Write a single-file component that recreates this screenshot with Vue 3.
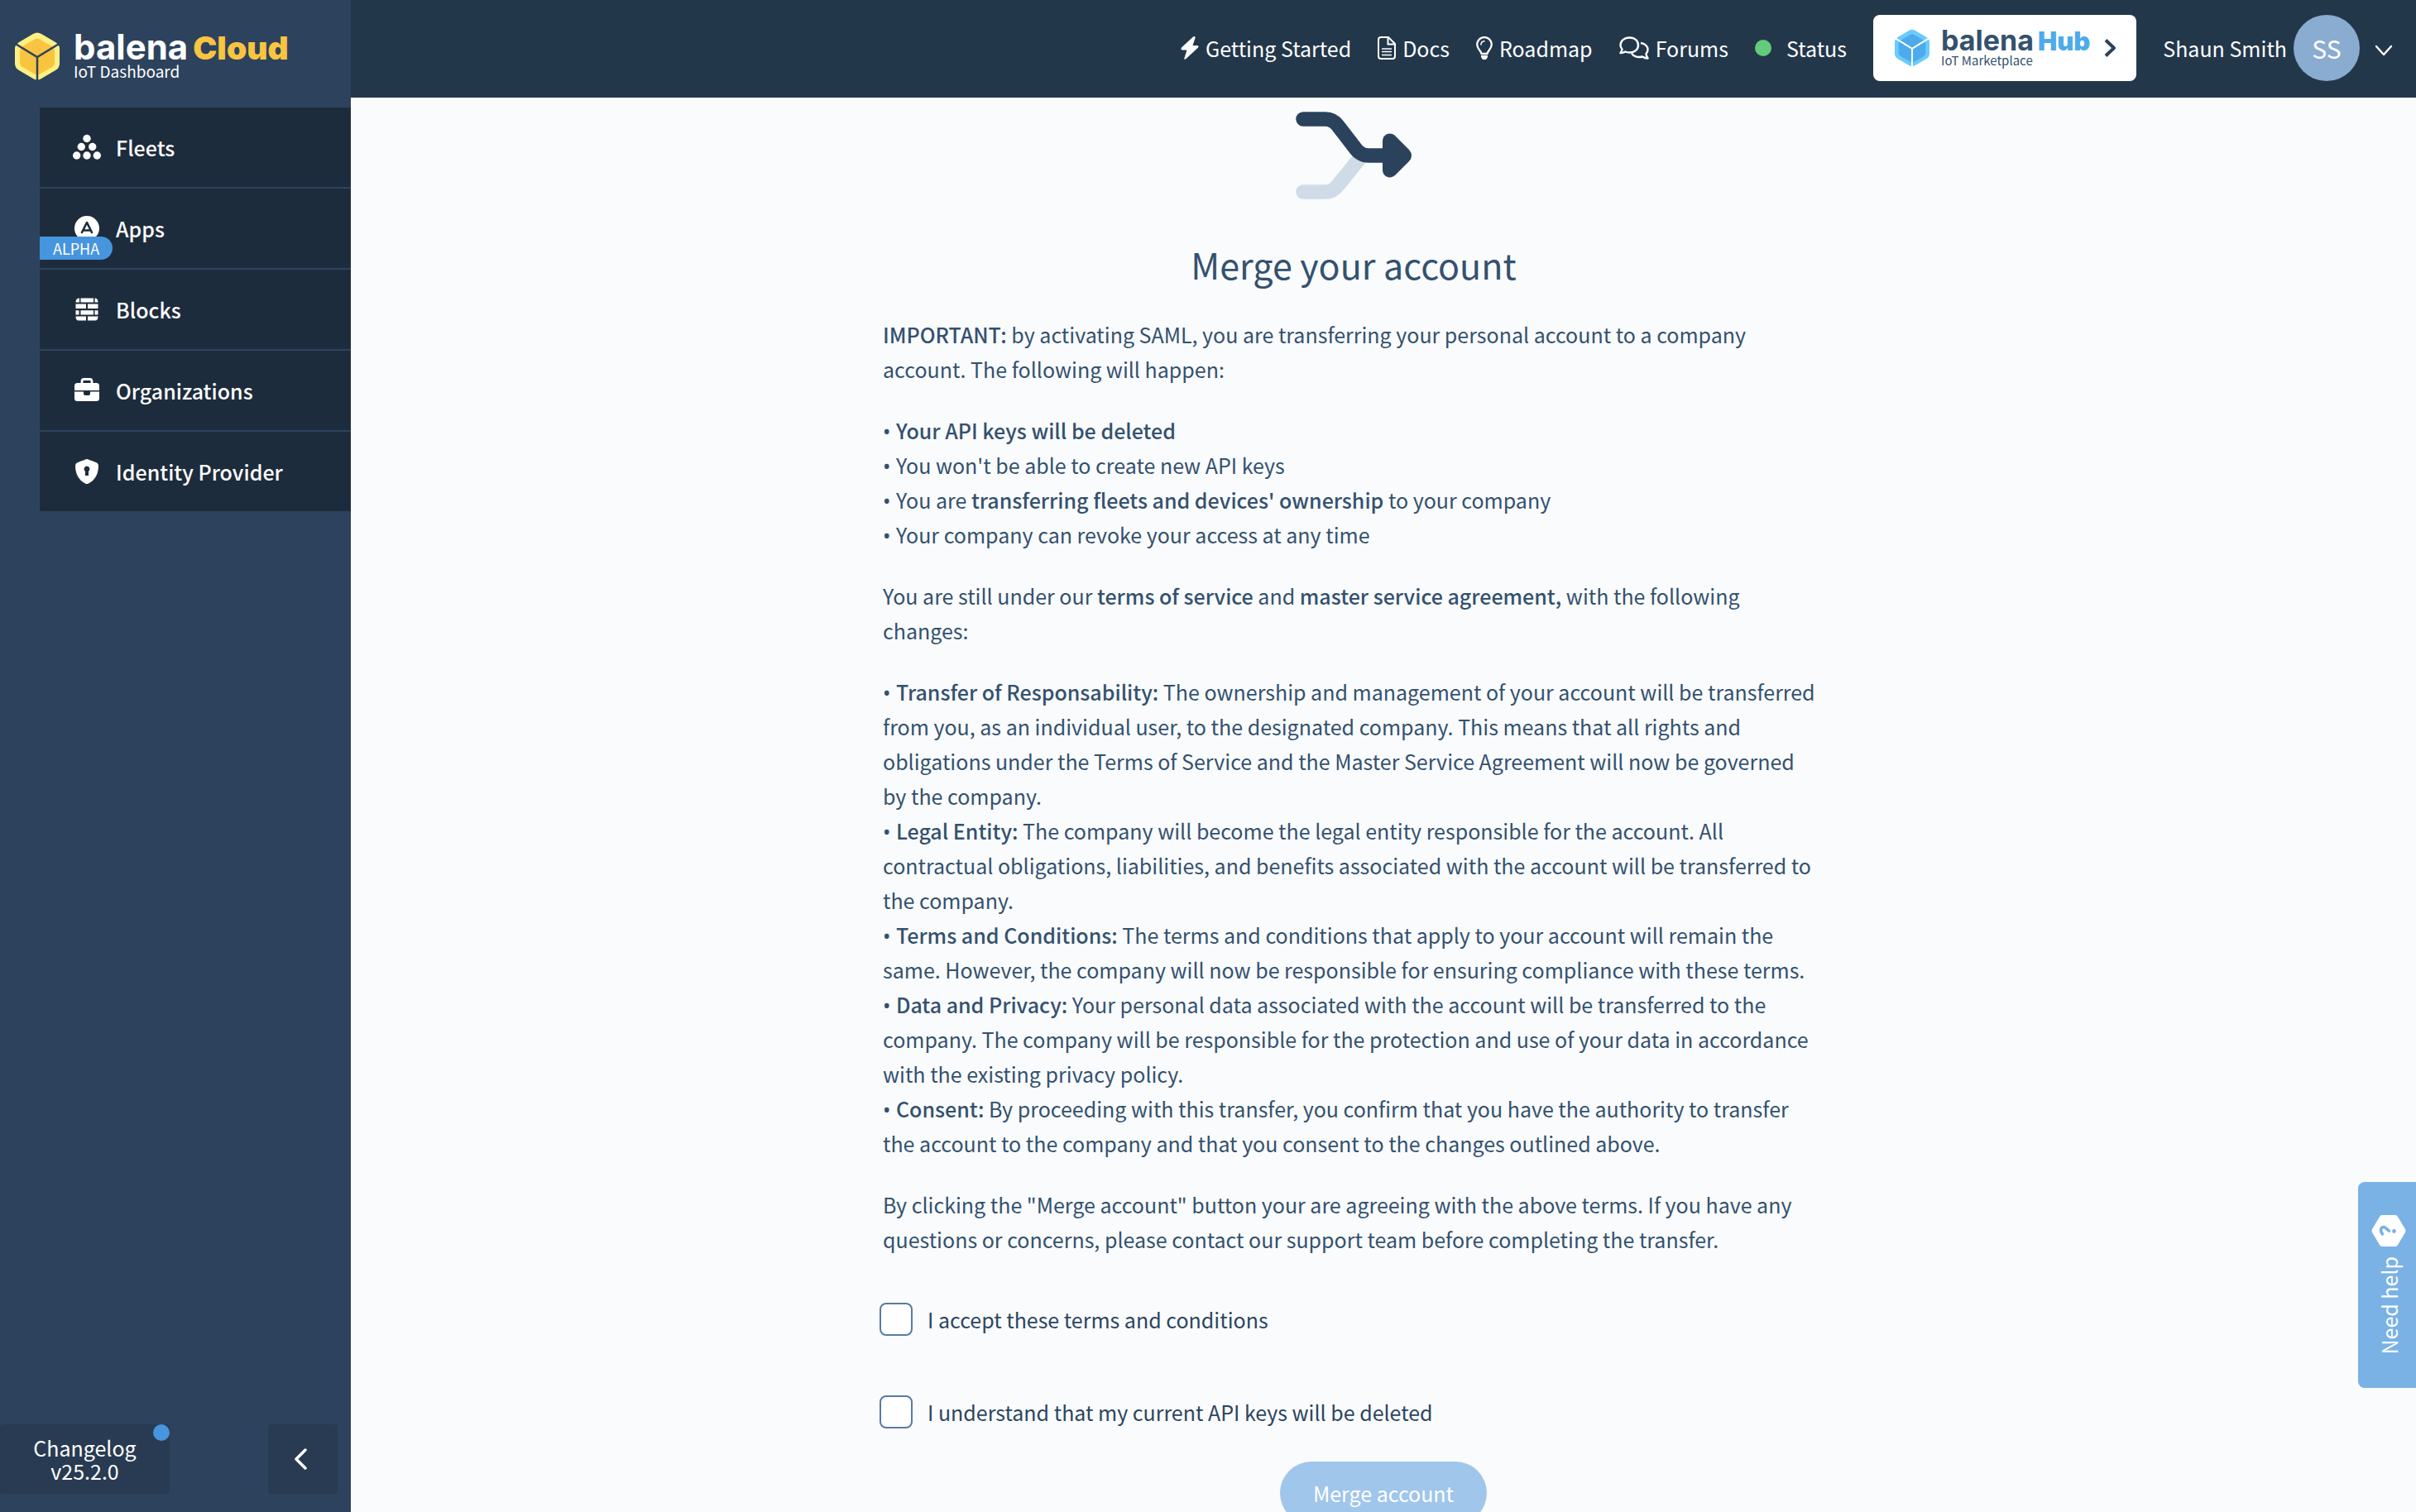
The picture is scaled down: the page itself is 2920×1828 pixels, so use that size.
<script setup>
import { ref } from 'vue'

const accepted = ref(false)
const understood = ref(false)

const changes = [
  ['Transfer of Responsability:', 'The ownership and management of your account will be transferred from you, as an individual user, to the designated company. This means that all rights and obligations under the Terms of Service and the Master Service Agreement will now be governed by the company.'],
  ['Legal Entity:', 'The company will become the legal entity responsible for the account. All contractual obligations, liabilities, and benefits associated with the account will be transferred to the company.'],
  ['Terms and Conditions:', 'The terms and conditions that apply to your account will remain the same. However, the company will now be responsible for ensuring compliance with these terms.'],
  ['Data and Privacy:', 'Your personal data associated with the account will be transferred to the company. The company will be responsible for the protection and use of your data in accordance with the existing privacy policy.'],
  ['Consent:', 'By proceeding with this transfer, you confirm that you have the authority to transfer the account to the company and that you consent to the changes outlined above.'],
]
</script>

<template>
  <div class="app">
    <aside class="sidebar">
      <a class="brand" href="#">
        <svg width="54" height="58" viewBox="0 0 54 58">
          <path d="M22 2Q27-1 32 2L49 12Q54 15 54 20V38Q54 43 49 46L32 56Q27 59 22 56L5 46Q0 43 0 38V20Q0 15 5 12Z" fill="#fff084" />
          <path d="M24 8.500Q27 6.500 30 8.500L45 17Q48 19 48 22V36Q48 40 45 42L30 50.500Q27 52.500 24 50.500L9 42Q6 40 6 36V22Q6 19 9 17Z" fill="#f9c440" />
          <path d="M0 13.500L27 30L54 13.500M27 30V59" fill="none" stroke="#2d435d" stroke-width="2.500" />
        </svg>
        <span class="brand-text">
          <span class="wordmark">balena<b>Cloud</b></span>
          <span class="tagline">IoT Dashboard</span>
        </span>
      </a>

      <nav class="menu">
        <a href="#">
          <svg class="menu-icon" viewBox="0 0 34 34" fill="#fff">
            <circle cx="17" cy="6.500" r="4.700" /><circle cx="10.300" cy="16.500" r="4.700" /><circle cx="23.700" cy="16.500" r="4.700" />
            <circle cx="4.700" cy="27" r="4.700" /><circle cx="17" cy="27" r="4.700" /><circle cx="29.300" cy="27" r="4.700" />
          </svg>
          Fleets
        </a>
        <a href="#">
          <svg class="menu-icon" viewBox="0 0 34 34">
            <circle cx="17" cy="17" r="15" fill="#fff" />
            <path d="M11 22L17 10L23 22M13.500 19.500H20.500" fill="none" stroke="#1d2c3c" stroke-width="2.600" stroke-linecap="round" stroke-linejoin="round" />
          </svg>
          Apps
          <span class="badge">ALPHA</span>
        </a>
        <a href="#">
          <svg class="menu-icon" viewBox="0 0 34 34" fill="#fff">
            <path d="M8 3.500V8.500H3.500Q3.500 3.500 8 3.500ZM9.500 3.500H25V8.500H9.500ZM26.500 3.500Q30.500 3.500 30.500 8.500H26.500ZM3.500 10.500H16V16H3.500ZM18 10.500H30.500V16H18ZM3.500 18.200H7.500V23.500H3.500ZM9.500 18.200H25V23.500H9.500ZM26.500 18.200H30.500V23.500H26.500ZM3.500 25.500H16V30.500H7Q3.500 30.500 3.500 25.500ZM18 25.500H30.500Q30.500 30.500 27 30.500H18Z" />
          </svg>
          Blocks
        </a>
        <a href="#">
          <svg class="menu-icon" viewBox="0 0 34 34">
            <path d="M11 9V6Q11 3.500 13.500 3.500H20.500Q23 3.500 23 6V9" fill="none" stroke="#fff" stroke-width="2.800" />
            <path d="M5.500 8H28.500Q32 8 32 11.500V17H2V11.500Q2 8 5.500 8ZM2 18.500H13V21Q13 23 15 23H19Q21 23 21 21V18.500H32V26.500Q32 30 28.500 30H5.500Q2 30 2 26.500Z" fill="#fff" />
          </svg>
          Organizations
        </a>
        <a href="#">
          <svg class="menu-icon" viewBox="0 0 34 34">
            <path d="M17 2Q18 2 29 6.500Q31 7.500 31 10C31 21 26 28 19 31.500Q17 32.500 15 31.500C8 28 3 21 3 10Q3 7.500 5 6.500Q16 2 17 2Z" fill="#fff" />
            <path d="M17 10.500A3.600 3.600 0 0 1 19 17V22H15V17A3.600 3.600 0 0 1 17 10.500Z" fill="#1d2c3c" />
          </svg>
          Identity Provider
        </a>
      </nav>

      <div class="sidebar-foot">
        <button class="changelog" type="button">Changelog<br />v25.2.0<i class="dot"></i></button>
        <button class="collapse" type="button" aria-label="Collapse sidebar">
          <svg width="16" height="26" viewBox="0 0 16 26"><path d="M13 2L2 13L13 24" fill="none" stroke="#fff" stroke-width="3.500" stroke-linecap="round" stroke-linejoin="round" /></svg>
        </button>
      </div>
    </aside>

    <div class="page">
      <header class="topbar">
        <nav class="links">
          <a href="#">
            <svg width="22" height="28" viewBox="0 0 22 28"><path d="M15 .5Q18-1 17.500 2L14.500 11H20Q23 11.500 20.500 14L6.500 27Q3.500 29 4.500 26L7.500 16.500H2Q-1 16 1.500 13Z" fill="#fff" /></svg>
            Getting Started
          </a>
          <a href="#">
            <svg width="22" height="28" viewBox="0 0 22 28" fill="none" stroke="#fff" stroke-width="2"><path d="M4 1H13L21 9V24Q21 27 18 27H4Q1 27 1 24V4Q1 1 4 1ZM12.500 1V9.500H21" /><path d="M5 15H17M5 18.500H17M5 22.500H17" stroke-width="1.600" /></svg>
            Docs
          </a>
          <a href="#">
            <svg width="20" height="28" viewBox="0 0 20 28" fill="none" stroke="#fff"><path d="M6.500 21C6 17.500 1.200 15 1.200 9.800A8.800 8.800 0 0 1 18.800 9.800C18.800 15 14 17.500 13.500 21Z" stroke-width="2.300" stroke-linejoin="round" /><path d="M6 10Q6 6 10 5.800" stroke-width="1.600" stroke-linecap="round" /><path d="M6 23H14V25L12 28H8L6 25Z" fill="#fff" stroke="none" /></svg>
            Roadmap
          </a>
          <a href="#">
            <svg width="36" height="28" viewBox="0 0 36 28" fill="none" stroke="#fff" stroke-width="2.400" stroke-linejoin="round"><path d="M12.500 1.500C19 1.500 23 5.500 23 10.500S19 19.500 12.500 19.500Q9.500 19.500 7.500 18.500Q5 20 1.500 20Q3.500 17.500 3.500 15.500Q1.500 13 1.500 10.500C1.500 5.500 6 1.500 12.500 1.500Z" /><path d="M26 8C31 8.500 34.500 12 34.500 16Q34.500 19 32.500 21Q32.500 23.500 34.500 26.500Q31 26.500 28 24.500C22 26 17 24 15 20.500" /></svg>
            Forums
          </a>
          <a href="#" class="status"><i></i>Status</a>
        </nav>

        <a class="hub" href="#">
          <svg width="42" height="48" viewBox="0 0 54 58">
            <path d="M22 2Q27-1 32 2L49 12Q54 15 54 20V38Q54 43 49 46L32 56Q27 59 22 56L5 46Q0 43 0 38V20Q0 15 5 12Z" fill="#6bcbfb" />
            <path d="M24 8.500Q27 6.500 30 8.500L45 17Q48 19 48 22V36Q48 40 45 42L30 50.500Q27 52.500 24 50.500L9 42Q6 40 6 36V22Q6 19 9 17Z" fill="#4dabec" />
            <path d="M0 13.500L27 30L54 13.500M27 30V59" fill="none" stroke="#fff" stroke-width="2.500" />
          </svg>
          <span class="brand-text">
            <span class="wordmark">balena<b>Hub</b></span>
            <span class="tagline">IoT Marketplace</span>
          </span>
          <svg width="16" height="24" viewBox="0 0 16 24"><path d="M3 2.500L13 12L3 21.500" fill="none" stroke="#2d435d" stroke-width="4" stroke-linejoin="round" /></svg>
        </a>

        <button class="user" type="button">
          Shaun Smith
          <span class="avatar">SS</span>
          <svg class="caret" width="22" height="14" viewBox="0 0 22 14"><path d="M2 2L11 12L20 2" fill="none" stroke="#fff" stroke-width="2.400" stroke-linecap="round" stroke-linejoin="round" /></svg>
        </button>
      </header>

      <main class="content">
        <form class="merge" @submit.prevent>
          <section class="terms">
            <svg class="merge-icon" width="140" height="106" viewBox="0 0 140 106" fill="none">
              <path d="M9 97H36Q45 97 51 89L77 57" stroke="#cfdbe7" stroke-width="17.500" stroke-linecap="round" />
              <path d="M9 9H36Q45 9 51 17L71 43Q78 53 88 53H112" stroke="#2b425c" stroke-width="17.500" stroke-linecap="round" />
              <path d="M105 36C105 27 114 24 120 29L137 46Q143 53 137 60L120 77C114 82 105 79 105 70Z" fill="#2b425c" />
            </svg>
            <h1>Merge your account</h1>
            <p><strong>IMPORTANT:</strong> by activating SAML, you are transferring your personal account to a company account. The following will happen:</p>
            <ul>
              <li><strong>Your API keys will be deleted</strong></li>
              <li>You won't be able to create new API keys</li>
              <li>You are <strong>transferring fleets and devices' ownership</strong> to your company</li>
              <li>Your company can revoke your access at any time</li>
            </ul>
            <p>You are still under our <strong>terms of service</strong> and <strong>master service agreement,</strong> with the following changes:</p>
            <ul>
              <li v-for="[name, text] in changes" :key="name"><strong>{{ name }}</strong> {{ text }}</li>
            </ul>
            <p>By clicking the "Merge account" button your are agreeing with the above terms. If you have any questions or concerns, please contact our support team before completing the transfer.</p>
          </section>
          <div class="checks">
            <label class="check"><input v-model="accepted" type="checkbox" />I accept these terms and conditions</label>
            <label class="check"><input v-model="understood" type="checkbox" />I understand that my current API keys will be deleted</label>
          </div>
          <button class="submit" type="submit" :disabled="!accepted || !understood">Merge account</button>
        </form>
      </main>
    </div>

    <button class="help" type="button">
      <svg width="42" height="38" viewBox="0 0 42 38">
        <path d="M10 2Q11 0 13 0H29Q31 0 32 2L41 17Q42 19 41 21L32 36Q31 38 29 38H13Q11 38 10 36L1 21Q0 19 1 17Z" fill="#fff" />
        <path d="M14.500 24C10 20 11 14.500 15 14.500C19 14.500 18.500 19.500 23 19.500" fill="none" stroke="#7ab2e5" stroke-width="3.600" />
        <circle cx="27.500" cy="19.500" r="2.400" fill="#7ab2e5" />
      </svg>
      <span>Need help</span>
    </button>
  </div>
</template>

<style>
body {
  margin: 0;
}
</style>

<style scoped>
.app {
  display: flex;
  height: 100vh;
  overflow: hidden;
  background: #f9fbfd;
  color: #34516e;
  font: 25px/42px "Noto Sans CJK SC", "Noto Sans", sans-serif;
}
a {
  color: inherit;
  text-decoration: none;
}
button {
  border: 0;
  padding: 0;
  font: inherit;
  color: #fff;
  cursor: pointer;
}
svg {
  flex: none;
}
strong {
  font-weight: 500;
}

.sidebar {
  display: flex;
  flex-direction: column;
  flex: none;
  width: 424px;
  background: #2d435d;
  color: #fff;
}
.brand {
  display: flex;
  align-items: center;
  box-sizing: border-box;
  height: 130px;
  gap: 17px;
  padding: 6px 18px 0;
}
.brand-text {
  display: flex;
  flex-direction: column;
}
.wordmark {
  display: flex;
  align-items: baseline;
  gap: 6px;
  font: 700 42px/34px Inter, sans-serif;
}
.wordmark b {
  color: #f9c440;
  font-size: 39px;
}
.tagline {
  font-size: 19px;
  line-height: 22px;
}
.menu {
  display: flex;
  flex-direction: column;
  gap: 2px;
  margin-left: 48px;
}
.menu a {
  position: relative;
  display: flex;
  align-items: center;
  gap: 18px;
  height: 96px;
  padding-left: 40px;
  background: #1d2c3c;
  font-weight: 500;
}
.menu-icon {
  width: 34px;
  height: 34px;
}
.badge {
  position: absolute;
  left: 0;
  bottom: 10px;
  padding: 0 16px;
  border-radius: 0 14px 14px 0;
  background: #4795de;
  font-size: 18px;
  line-height: 28px;
  font-weight: 400;
}
.sidebar-foot {
  display: flex;
  justify-content: space-between;
  margin-top: auto;
  padding: 0 16px 22px 0;
}
.changelog,
.collapse {
  position: relative;
  height: 84px;
  border-radius: 4px;
  background: #283b52;
  line-height: 28px;
}
.changelog {
  width: 205px;
}
.collapse {
  display: flex;
  align-items: center;
  justify-content: center;
  width: 84px;
  padding-right: 4px;
  box-sizing: border-box;
}
.dot {
  position: absolute;
  top: 0;
  right: 0;
  width: 20px;
  height: 20px;
  border-radius: 50%;
  background: #4795de;
}

.page {
  display: flex;
  flex-direction: column;
  flex: 1;
  min-width: 0;
}
.topbar {
  display: flex;
  align-items: center;
  justify-content: flex-end;
  flex: none;
  gap: 32px;
  box-sizing: border-box;
  height: 118px;
  padding: 0 28px 2px;
  background: #23374b;
  color: #fff;
}
.links {
  display: flex;
  gap: 32px;
}
.links a {
  display: flex;
  align-items: center;
  gap: 8px;
}
.status i {
  width: 20px;
  height: 20px;
  margin-right: 10px;
  border-radius: 50%;
  background: #64cb7a;
}
.hub {
  display: flex;
  align-items: center;
  box-sizing: border-box;
  height: 80px;
  padding: 0 24px 0 26px;
  border-radius: 8px;
  background: #fff;
  color: #34516e;
}
.hub .brand-text {
  margin: 0 16px 0 14px;
}
.hub .wordmark {
  gap: 5px;
  font-size: 34px;
  line-height: 28px;
}
.hub .wordmark b {
  color: #4dabec;
  font-size: 31px;
}
.hub .tagline {
  font-size: 15px;
  line-height: 18px;
}
.user {
  display: flex;
  align-items: center;
  background: none;
}
.avatar {
  width: 80px;
  margin: 0 18px 0 8px;
  border-radius: 50%;
  background: #8aacd0;
  font-size: 30px;
  line-height: 80px;
}
.caret {
  margin-top: 6px;
}

.content {
  flex: 1;
  min-height: 0;
  overflow-y: auto;
  scrollbar-width: none;
}
.merge {
  display: flex;
  flex-direction: column;
  align-items: flex-start;
  width: 1218px;
  margin: 0 auto;
  padding: 17px 0 48px;
}
.terms {
  width: 1138px;
  margin-left: 4px;
}
.merge-icon {
  display: block;
  margin: 0 auto;
}
h1 {
  margin: 46px 0 32px;
  font-size: 43px;
  line-height: 64px;
  font-weight: 400;
  text-align: center;
}
p,
ul {
  max-width: 1131px;
  margin: 0 0 32px;
  padding: 0;
  list-style: none;
}
li::before {
  content: "• ";
  font-family: "Noto Sans", sans-serif;
  line-height: 1;
}
.checks {
  display: flex;
  flex-direction: column;
  gap: 70px;
  margin: 23px 0 39px;
}
.check {
  display: flex;
  align-items: center;
  gap: 18px;
  color: #2d455f;
}
.check input {
  appearance: none;
  box-sizing: border-box;
  width: 40px;
  height: 40px;
  margin: 0;
  border: 2px solid #587ba3;
  border-radius: 8px;
  background: #fff;
}
.check input:checked {
  background: #4795de;
}
.submit {
  align-self: center;
  width: 250px;
  height: 76px;
  border-radius: 38px;
  background: #4795de;
}
.submit:disabled {
  background: #a0c6eb;
}

.help {
  position: absolute;
  right: 0;
  bottom: 150px;
  display: flex;
  flex-direction: column;
  align-items: center;
  justify-content: center;
  gap: 12px;
  box-sizing: border-box;
  width: 70px;
  height: 249px;
  padding-left: 4px;
  border-radius: 8px 0 0 8px;
  background: #7ab2e5;
}
.help span {
  writing-mode: vertical-rl;
  transform: rotate(180deg);
}
</style>
